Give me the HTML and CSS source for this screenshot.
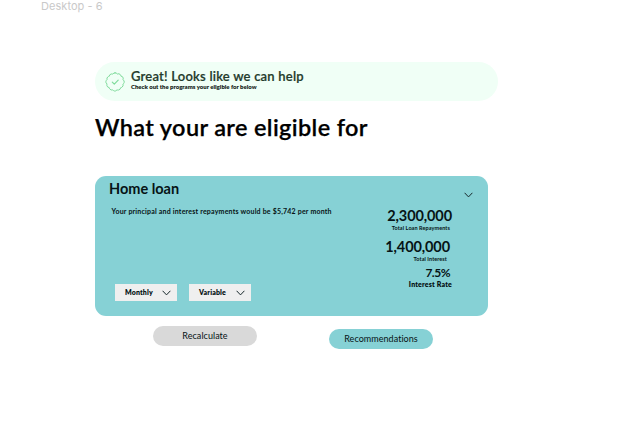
FILE: index.html
```html
<!DOCTYPE html>
<html lang="en">
<head>
<meta charset="utf-8">
<title>Desktop - 6</title>
<link rel="stylesheet" href="styles.css">
</head>
<body>
<div class="frame-name"><span>Desktop - 6</span></div>
<main class="page">
  <section class="banner">
    <svg class="badge" viewBox="0 0 20 20" fill="none" stroke="#7fdb9b" stroke-width="1" stroke-linejoin="round" stroke-linecap="round">
      <path d="M10 .8Q11.4 .6 12.3 2Q14.1 1.2 15.3 2.6Q15.8 3.2 15.9 4.1Q17.9 4.3 18.2 6Q18.3 6.9 18 7.7Q19.6 8.8 19.2 10.4Q18.9 11.4 18 12.1Q18.5 14 17.2 15Q16.6 15.6 15.7 15.7Q15.3 17.7 13.6 18Q12.8 18.2 12 17.8Q10.9 19.4 9.3 19Q8.4 18.7 7.8 17.9Q5.9 18.5 4.8 17Q4.3 16.4 4.2 15.6Q2.2 15.3 1.9 13.6Q1.7 12.8 2.1 12Q.5 11 .9 9.3Q1.2 8.3 2 7.7Q1.5 5.9 2.9 4.8Q3.5 4.3 4.3 4.2Q4.5 2.3 6.2 2Q7.1 1.8 7.8 2.1Q8.7 .8 10 .8Z"/>
      <path d="M7.3 10.2L9.3 12.2L13.2 8.2" stroke-width="1.2"/>
    </svg>
    <div>
      <h2 class="banner-title"><span>Great! Looks like we can help</span></h2>
      <p class="banner-note"><span>Check out the programs your eligible for below</span></p>
    </div>
  </section>
  <h1 class="heading"><span>What your are eligible for</span></h1>
  <section class="card">
    <div class="details">
      <h3 class="loan"><span>Home loan</span></h3>
      <p class="summary"><span>Your principal and interest repayments would be $5,742 per month</span></p>
      <div class="selects">
        <div class="select"><span>Monthly</span><svg class="chevron" viewBox="0 0 9 6"><path d="M.6 .8L4.5 4.9L8.4 .8"/></svg></div>
        <div class="select"><span>Variable</span><svg class="chevron" viewBox="0 0 9 6"><path d="M.6 .8L4.5 4.9L8.4 .8"/></svg></div>
      </div>
    </div>
    <div class="figures">
      <svg class="chevron toggle" viewBox="0 0 9 6"><path d="M.6 .8L4.5 4.9L8.4 .8"/></svg>
      <p class="amount repay">2,300,000</p>
      <p class="caption repay-label">Total Loan Repayments</p>
      <p class="amount interest">1,400,000</p>
      <p class="caption interest-label">Total Interest</p>
      <p class="rate">7.5%</p>
      <p class="rate-label">Interest Rate</p>
    </div>
  </section>
  <div class="actions">
    <div class="button grey">Recalculate</div>
    <div class="button teal">Recommendations</div>
  </div>
</main>
</body>
</html>
```
FILE: styles.css
```css
* { box-sizing: border-box; }
body { margin: 0; background: #fff; color: #061416; font-family: Lato, "Liberation Sans", sans-serif; font-variant-ligatures: none; white-space: nowrap; overflow: hidden; }
h1, h2, h3, p { margin: 0; }
svg { display: block; flex: none; }
.frame-name { height: 14px; padding-left: 41px; font: 11px/13px Inter, sans-serif; letter-spacing: .05px; color: #c9c9c9; }
.page { padding: 48px 0 0 95px; }
.banner { display: flex; width: 402.5px; height: 39px; padding: 0 10px; gap: 6px; border-radius: 20px; background: #f0fff6; color: #243b2c; }
.badge { width: 20px; height: 20px; margin-top: 10px; }
.banner-title { padding-top: 6px; font-size: 13px; line-height: 16px; font-weight: 600; letter-spacing: .21px; -webkit-text-stroke: .2px; }
.banner-note { font-size: 6px; line-height: 6px; font-weight: 800; letter-spacing: -.01px; color: #16251b; }
.heading { margin-top: 12px; height: 30px; font-size: 23.5px; line-height: 29px; font-weight: 600; letter-spacing: .36px; color: #000; -webkit-text-stroke: .25px; }
.card { display: flex; justify-content: space-between; width: 393px; height: 140px; margin-top: 33.4px; border-radius: 11px; background: #86d1d5; }
.details { padding: 4px 0 0 14px; }
.loan { font-size: 14.5px; line-height: 18px; font-weight: 700; }
.summary { margin: 9px 0 0 2.5px; font-size: 7px; line-height: 9px; font-weight: 700; letter-spacing: .2px; }
.selects { display: flex; gap: 12px; margin: 68px 0 0 6px; }
.select { display: flex; align-items: center; justify-content: space-between; width: 62px; height: 17px; padding: 0 6px 1px 10px; background: #efefef; font-size: 7px; font-weight: 800; letter-spacing: .14px; }
.chevron { width: 9px; height: 6px; margin-top: 1px; fill: none; stroke: #18282b; stroke-width: 1; }
.figures { display: flex; flex-direction: column; align-items: flex-end; padding: 15px 36px 0 0; }
.toggle { margin-right: -21px; }
.amount { font-size: 14.5px; line-height: 16px; font-weight: 700; letter-spacing: -.1px; }
.repay { margin-top: 10px; }
.caption { font-size: 5.5px; line-height: 6px; font-weight: 700; letter-spacing: .08px; }
.repay-label { margin: 1px 2px 0 0; }
.interest { margin: 8px 2px 0 0; }
.interest-label { margin: 1px 5px 0 0; }
.rate { margin: 4px 2px 0 0; font-size: 12px; line-height: 14px; font-weight: 700; letter-spacing: -.5px; }
.rate-label { font-size: 7px; line-height: 9px; font-weight: 800; letter-spacing: .18px; }
.actions { display: flex; gap: 72px; padding: 9.4px 0 0 58px; }
.button { width: 104px; height: 20px; border-radius: 10px; font-size: 9px; line-height: 20px; text-align: center; letter-spacing: .05px; }
.grey { background: #d9d9d9; }
.teal { margin-top: 3px; background: #86d1d5; }
```
